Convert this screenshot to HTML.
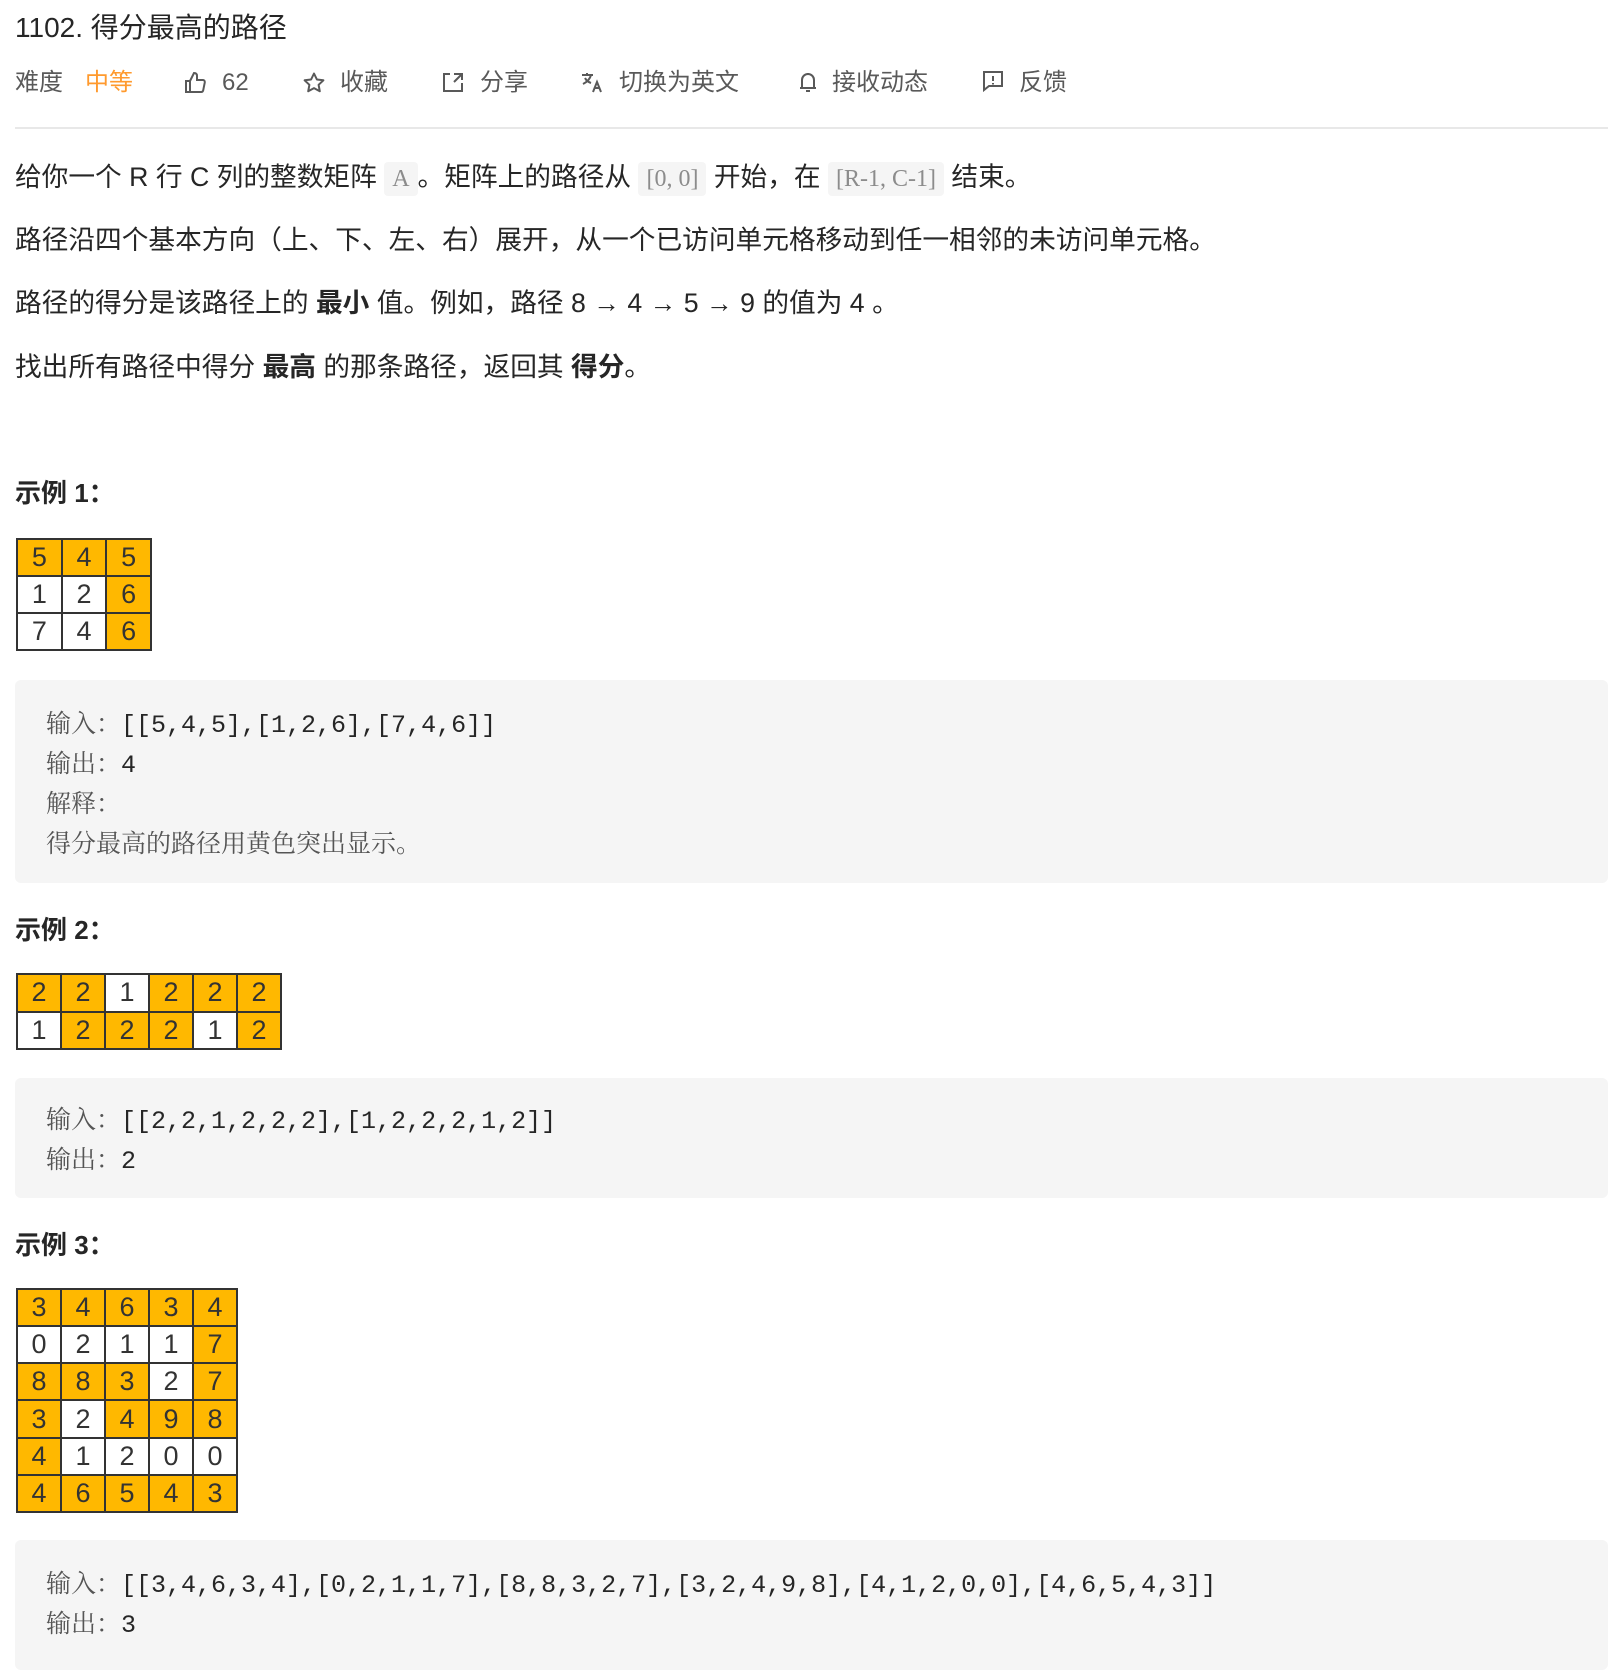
<!DOCTYPE html>
<html><head><meta charset="utf-8"><style>
body{margin:0;width:1621px;height:1655px;background:#fff;position:relative;overflow:hidden;font-family:"Liberation Sans","Noto Sans CJK SC",sans-serif;color:#262626}
.a{position:absolute;white-space:nowrap}
.t{font-size:28px;color:#262626}
.tb{font-size:24px;color:#595959;height:30px;line-height:30px;top:68px}
.p{font-size:26.7px;line-height:34px;left:15px}
b{font-weight:bold}
code{font-family:"Liberation Serif","Noto Serif CJK SC",serif;font-size:24px;color:#8c8c8c;background:#f5f5f5;border-radius:4px;padding:4px 8px}
.h{font-size:26px;font-weight:bold;left:15px;line-height:34px}
.pre{position:absolute;left:15px;width:1593px;background:#f5f5f5;border-radius:6px}
.cl{position:absolute;left:31px;font-size:25px;line-height:40px;font-family:"Liberation Mono","Noto Serif CJK SC",monospace;color:#262626}
.cl .z{font-family:"Noto Serif CJK SC",serif;color:#555}
table{position:absolute;left:16px;border-collapse:collapse;border:2px solid #333}
td{border:2px solid #333;text-align:center;font-size:27px;color:#333;padding:0}
.y{background:#ffb800}
svg{position:absolute}
</style></head><body>
<div class="a t" style="left:15px;top:11px;line-height:34px">1102. 得分最高的路径</div>

<div class="a tb" style="left:15px">难度</div>
<div class="a tb" style="left:85px;color:#ff9a2e">中等</div>
<svg style="left:183px;top:71px" width="24" height="24" viewBox="0 0 24 24" fill="none" stroke="#595959" stroke-width="2"><path d="M3 10h4v11H3zM7 10l4-8c2 0 3 1 3 3v4h6c1 0 2 1 1.8 2.3l-1.6 8c-.2.9-1 1.7-2 1.7H7"/></svg>
<div class="a tb" style="left:222px">62</div>
<svg style="left:302px;top:71px" width="24" height="24" viewBox="0 0 24 24" fill="none" stroke="#595959" stroke-width="2" stroke-linejoin="round"><path d="M12 2.5l2.9 6 6.5.8-4.8 4.5 1.2 6.5L12 17.1l-5.8 3.2 1.2-6.5-4.8-4.5 6.5-.8z"/></svg>
<div class="a tb" style="left:340px">收藏</div>
<svg style="left:441px;top:70px" width="24" height="24" viewBox="0 0 24 24" fill="none" stroke="#595959" stroke-width="2"><path d="M9 4H3v17h18v-8M13 4h8v6M21 4l-8 8"/></svg>
<div class="a tb" style="left:480px">分享</div>
<svg style="left:580px;top:70px" width="24" height="24" viewBox="0 0 24 24" fill="none" stroke="#595959" stroke-width="2"><path d="M2 5h11M7 3v2M11 5c-1 4-4 7-8 9M5 8c1 2 3 4 6 5M13 22l4-10 4 10M14.5 18h5"/></svg>
<div class="a tb" style="left:619px">切换为英文</div>
<svg style="left:796px;top:70px" width="24" height="24" viewBox="0 0 24 24" fill="none" stroke="#595959" stroke-width="2"><path d="M6 18V10a6 6 0 0 1 12 0v8zM4 18h16M10 21h4M12 3v1"/></svg>
<div class="a tb" style="left:832px">接收动态</div>
<svg style="left:981px;top:69px" width="24" height="24" viewBox="0 0 24 24" fill="none" stroke="#595959" stroke-width="2"><path d="M3 3h18v14H8l-5 4zM12 7v5M12 14v1.5"/></svg>
<div class="a tb" style="left:1019px">反馈</div>
<div class="a" style="left:15px;top:127px;width:1593px;height:2px;background:#e8e8e8"></div>

<div class="a p" style="top:160px">给你一个 R 行 C 列的整数矩阵 <code>A</code>。矩阵上的路径从 <code>[0, 0]</code> 开始，在 <code>[R-1, C-1]</code> 结束。</div>
<div class="a p" style="top:223px">路径沿四个基本方向（上、下、左、右）展开，从一个已访问单元格移动到任一相邻的未访问单元格。</div>
<div class="a p" style="top:286px">路径的得分是该路径上的 <b>最小</b> 值。例如，路径 8 → 4 → 5 → 9 的值为 4 。</div>
<div class="a p" style="top:350px">找出所有路径中得分 <b>最高</b> 的那条路径，返回其 <b>得分</b>。</div>

<div class="a h" style="top:476px">示例 1：</div>
<table style="top:538px;width:136px;height:113px">
<tr><td class="y">5</td><td class="y">4</td><td class="y">5</td></tr>
<tr><td>1</td><td>2</td><td class="y">6</td></tr>
<tr><td>7</td><td>4</td><td class="y">6</td></tr></table>
<div class="pre" style="top:680px;height:203px">
<div class="cl" style="top:22px"><span class="z">输入：</span>[[5,4,5],[1,2,6],[7,4,6]]</div>
<div class="cl" style="top:62px"><span class="z">输出：</span>4</div>
<div class="cl" style="top:102px"><span class="z">解释：</span></div>
<div class="cl" style="top:142px"><span class="z">得分最高的路径用黄色突出显示。</span></div>
</div>

<div class="a h" style="top:913px">示例 2：</div>
<table style="top:973px;width:266px;height:77px">
<tr><td class="y">2</td><td class="y">2</td><td>1</td><td class="y">2</td><td class="y">2</td><td class="y">2</td></tr>
<tr><td>1</td><td class="y">2</td><td class="y">2</td><td class="y">2</td><td>1</td><td class="y">2</td></tr></table>
<div class="pre" style="top:1078px;height:120px">
<div class="cl" style="top:20px"><span class="z">输入：</span>[[2,2,1,2,2,2],[1,2,2,2,1,2]]</div>
<div class="cl" style="top:60px"><span class="z">输出：</span>2</div>
</div>

<div class="a h" style="top:1228px">示例 3：</div>
<table style="top:1288px;width:222px;height:225px">
<tr><td class="y">3</td><td class="y">4</td><td class="y">6</td><td class="y">3</td><td class="y">4</td></tr>
<tr><td>0</td><td>2</td><td>1</td><td>1</td><td class="y">7</td></tr>
<tr><td class="y">8</td><td class="y">8</td><td class="y">3</td><td>2</td><td class="y">7</td></tr>
<tr><td class="y">3</td><td>2</td><td class="y">4</td><td class="y">9</td><td class="y">8</td></tr>
<tr><td class="y">4</td><td>1</td><td>2</td><td>0</td><td>0</td></tr>
<tr><td class="y">4</td><td class="y">6</td><td class="y">5</td><td class="y">4</td><td class="y">3</td></tr></table>
<div class="pre" style="top:1540px;height:130px">
<div class="cl" style="top:22px"><span class="z">输入：</span>[[3,4,6,3,4],[0,2,1,1,7],[8,8,3,2,7],[3,2,4,9,8],[4,1,2,0,0],[4,6,5,4,3]]</div>
<div class="cl" style="top:62px"><span class="z">输出：</span>3</div>
</div>
</body></html>
